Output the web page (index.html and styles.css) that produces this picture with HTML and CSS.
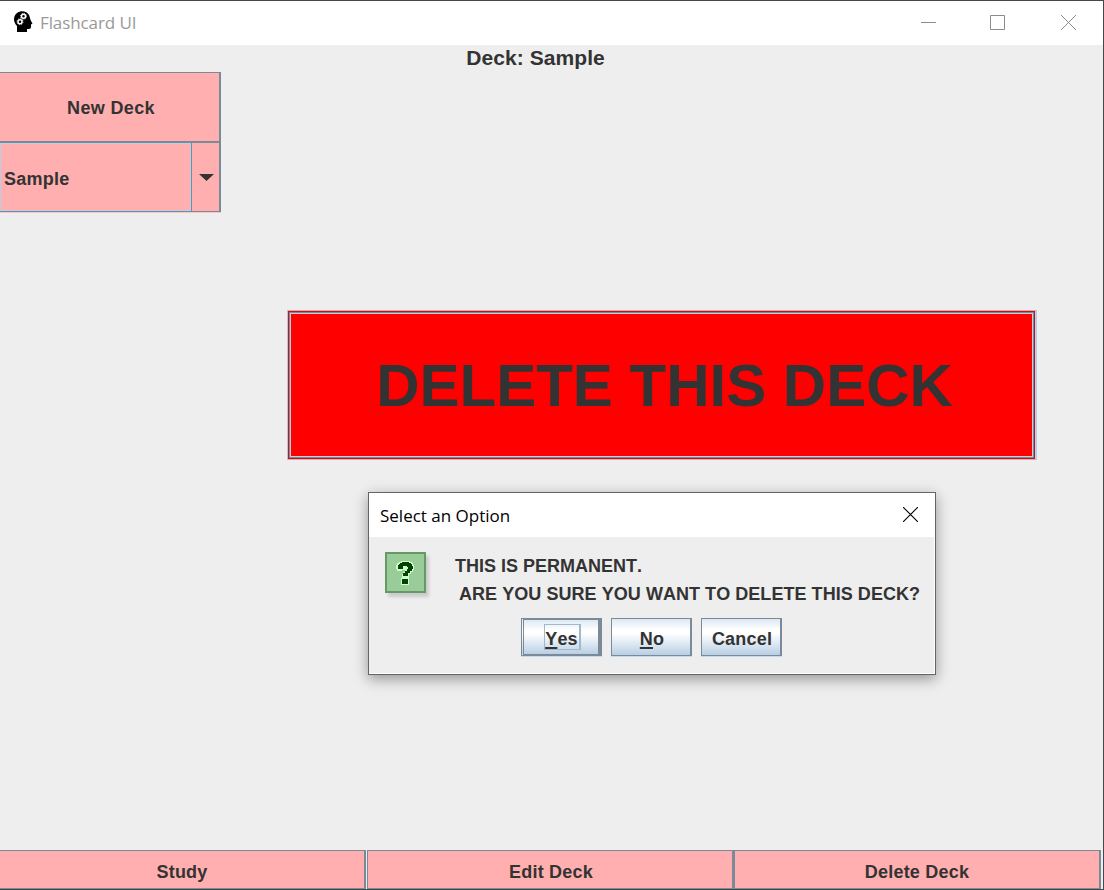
FILE: index.html
```html
<!DOCTYPE html>
<html lang="en">
<head>
<meta charset="utf-8">
<title>Flashcard UI</title>
<link rel="stylesheet" href="styles.css">
</head>
<body>
<div class="window">
  <header class="titlebar">
    <svg class="app-icon" width="19" height="22" viewBox="0 0 19 22">
      <path d="M3 21V15C-1 11-1 5 3 2C7-1 13 0 15 4C16 6 16 8 17 10L18.500 12.500L17 13.500V16Q17 18 15 18H13V21Z" fill="#000"/>
      <circle cx="9.500" cy="5.300" r="2" fill="none" stroke="#fff" stroke-width="1.500"/>
      <circle cx="9.500" cy="5.300" r="3" fill="none" stroke="#fff" stroke-width=".8" stroke-dasharray="1.200 1.150"/>
      <circle cx="6" cy="10.700" r="2" fill="none" stroke="#fff" stroke-width="1.500"/>
      <circle cx="6" cy="10.700" r="3" fill="none" stroke="#fff" stroke-width=".8" stroke-dasharray="1.200 1.150"/>
    </svg>
    <span class="app-title">Flashcard UI</span>
    <svg class="controls" width="157" height="16" viewBox="0 0 157 16" fill="none" stroke="#8c8c8c">
      <path d="M0 7.500H15"/>
      <path d="M69.500 .5H83.500V14.500H69.500Z"/>
      <path d="M140 0L155 15M155 0L140 15"/>
    </svg>
  </header>
  <h1 class="deck-title">Deck: Sample</h1>
  <main class="workspace">
    <aside class="sidebar">
      <button class="new-deck">New Deck</button>
      <div class="combo">
        <span class="combo-value">Sample</span>
        <span class="combo-arrow"><svg width="15" height="7" viewBox="0 0 15 7"><path d="M0 0H15L7.500 7Z" fill="#333"/></svg></span>
      </div>
    </aside>
    <section class="content">
      <button class="delete-big">DELETE THIS DECK</button>
    </section>
  </main>
  <nav class="actions">
    <button class="action study">Study</button>
    <button class="action edit">Edit Deck</button>
    <button class="action delete">Delete Deck</button>
  </nav>
  <div class="dialog">
    <div class="dialog-bar">
      <span>Select an Option</span>
      <svg width="15" height="15" viewBox="0 0 15 15" stroke="#000" stroke-width="1.1"><path d="M0 0L15 15M15 0L0 15"/></svg>
    </div>
    <div class="dialog-body">
      <div class="message">
        <div class="question">
          <svg width="19" height="25" viewBox="0 0 19 25">
            <path d="M3 1H5V0H14V1H16V2H17V4H18V9H17V11H15V13H13V16H13V24H5V17H6V13H7V11H9V9H6V10H1V8H0V4H1V2H3Z" fill="#ccffcc"/>
            <path d="M4 2H6V1H13V2H15V3H16V5H17V8H16V10H14V12H12V15H7V12H9V10H11V8H12V6H11V5H7V8H2V4H3V3H4ZM6 18H12V23H6Z" fill="#004400"/>
          </svg>
        </div>
        <div class="lines"><p>THIS IS PERMANENT.</p><p class="second">ARE YOU SURE YOU WANT TO DELETE THIS DECK?</p></div>
      </div>
      <div class="choices">
        <button class="choice focused"><span class="focus"><u>Y</u>es</span></button>
        <button class="choice"><span><u>N</u>o</span></button>
        <button class="choice"><span>Cancel</span></button>
      </div>
    </div>
  </div>
</div>
</body>
</html>
```
FILE: styles.css
```css
* { box-sizing: border-box; }
body { margin: 0; font: bold 18px/20px "Liberation Sans", Arial, sans-serif; color: #333; font-kerning: none; }
button { font: inherit; color: inherit; padding: 0; margin: 0; border-radius: 0; font-kerning: none; letter-spacing: .2px; }
p { margin: 0; }
svg { display: block; }
.window { position: relative; width: 1104px; height: 890px; display: flex; flex-direction: column; background: #eee; border: solid #47474a; border-width: 1px 1px 1px 0; overflow: hidden; }
.titlebar { height: 44px; flex: none; display: flex; align-items: flex-start; background: #fff; padding: 10px 25px 0 14px; }
.app-title { font: 17px/24px "Open Sans", "Noto Sans", sans-serif; letter-spacing: -.1px; color: #999; margin-left: 7px; }
.controls { margin: 4px 0 0 auto; }
.deck-title { margin: 0; height: 27px; flex: none; font-size: 21px; line-height: 26px; letter-spacing: .08px; text-align: center; padding-right: 32px; }
.workspace { flex: 1; display: flex; }
.sidebar { width: 221px; }
.new-deck { display: block; width: 221px; height: 71px; background: #ffafaf; border: solid #7a8a99; border-width: 1px 2px 2px 0; padding: 2px 0 0 3px; letter-spacing: .35px; }
.combo { display: flex; height: 69px; border: solid #7a8a99; border-width: 0 2px 1px 0; background: #ffafaf; box-shadow: 0 1px #f7c7c9; }
.combo-value { width: 191px; padding: 25px 3px; border: 1px solid #b8cfe5; letter-spacing: .25px; }
.combo-arrow { flex: 1; border-left: 1px solid #7a8a99; padding: 31px 0 0 7px; }
.content { flex: 1; padding: 238px 0 0 66px; }
.delete-big { display: block; width: 750px; height: 150px; font-size: 60px; line-height: 68px; letter-spacing: 0; background: #f00; border: solid; border-width: 1px 2px 1px 1px; border-color: #ff9a9f #b8cfe5 #ff9a9f #dfb6be; box-shadow: inset 0 0 0 1px #a02030, inset 0 0 0 2px #7a8a99, inset 0 0 0 3px #c7ccd8; padding: 2px 0 0 6px; }
.actions { display: flex; height: 39px; flex: none; width: 1101px; }
.action { background: #ffafaf; border: solid #7a8a99; border-width: 1px 2px 1px 0; padding-top: 5px; }
.study { width: 366px; }
.edit { width: 367px; border-left: 1px solid #7a8a99; margin-left: 1px; padding-left: 2px; }
.delete { flex: 1; border-left: 1px solid #7a8a99; }
.dialog { position: absolute; left: 368px; top: 491px; width: 568px; height: 183px; border: 1px solid #646464; background: #eee; box-shadow: 0 4px 13px rgba(0,0,0,.38); }
.dialog-bar { display: flex; justify-content: space-between; height: 44px; background: #fff; padding: 14px 17px 0 11px; font: 17px/17px "Open Sans", "Noto Sans", sans-serif; color: #000; }
.dialog-body { height: 137px; padding: 15px 0 0 16px; border: solid #fff; border-width: 0 1px 1px 0; }
.message { display: flex; height: 66px; }
.question { width: 41px; height: 41px; flex: none; border: 2px solid #669966; background: #99cc99; padding: 7px 0 0 9px; box-shadow: 3px 4px 3px #ccc; }
.lines { margin-left: 29px; padding-top: 4px; line-height: 20px; white-space: nowrap; }
.second { margin: 8px 0 0 4px; letter-spacing: .05px; }
.choices { display: flex; gap: 9px; margin-left: 136px; }
.choice { width: 81px; height: 38px; border: solid #7a8a99; border-width: 1px 2px 1px 1px; background: linear-gradient(#dde8f3, #fff 30%, #fff 40%, #b8cfe5); box-shadow: 0 1px #c8d8e7; padding: 3px 0 0 2px; }
.choice u { text-decoration-thickness: 2px; text-underline-offset: 2px; text-decoration-skip-ink: none; }
.focused { border-width: 2px 4px 2px 3px; border-left-style: double; }
.focus { display: inline-block; width: 37px; height: 26px; line-height: 28px; border: 1px solid #a3b8cc; border-right-width: 2px; margin-top: -4px; }
```
